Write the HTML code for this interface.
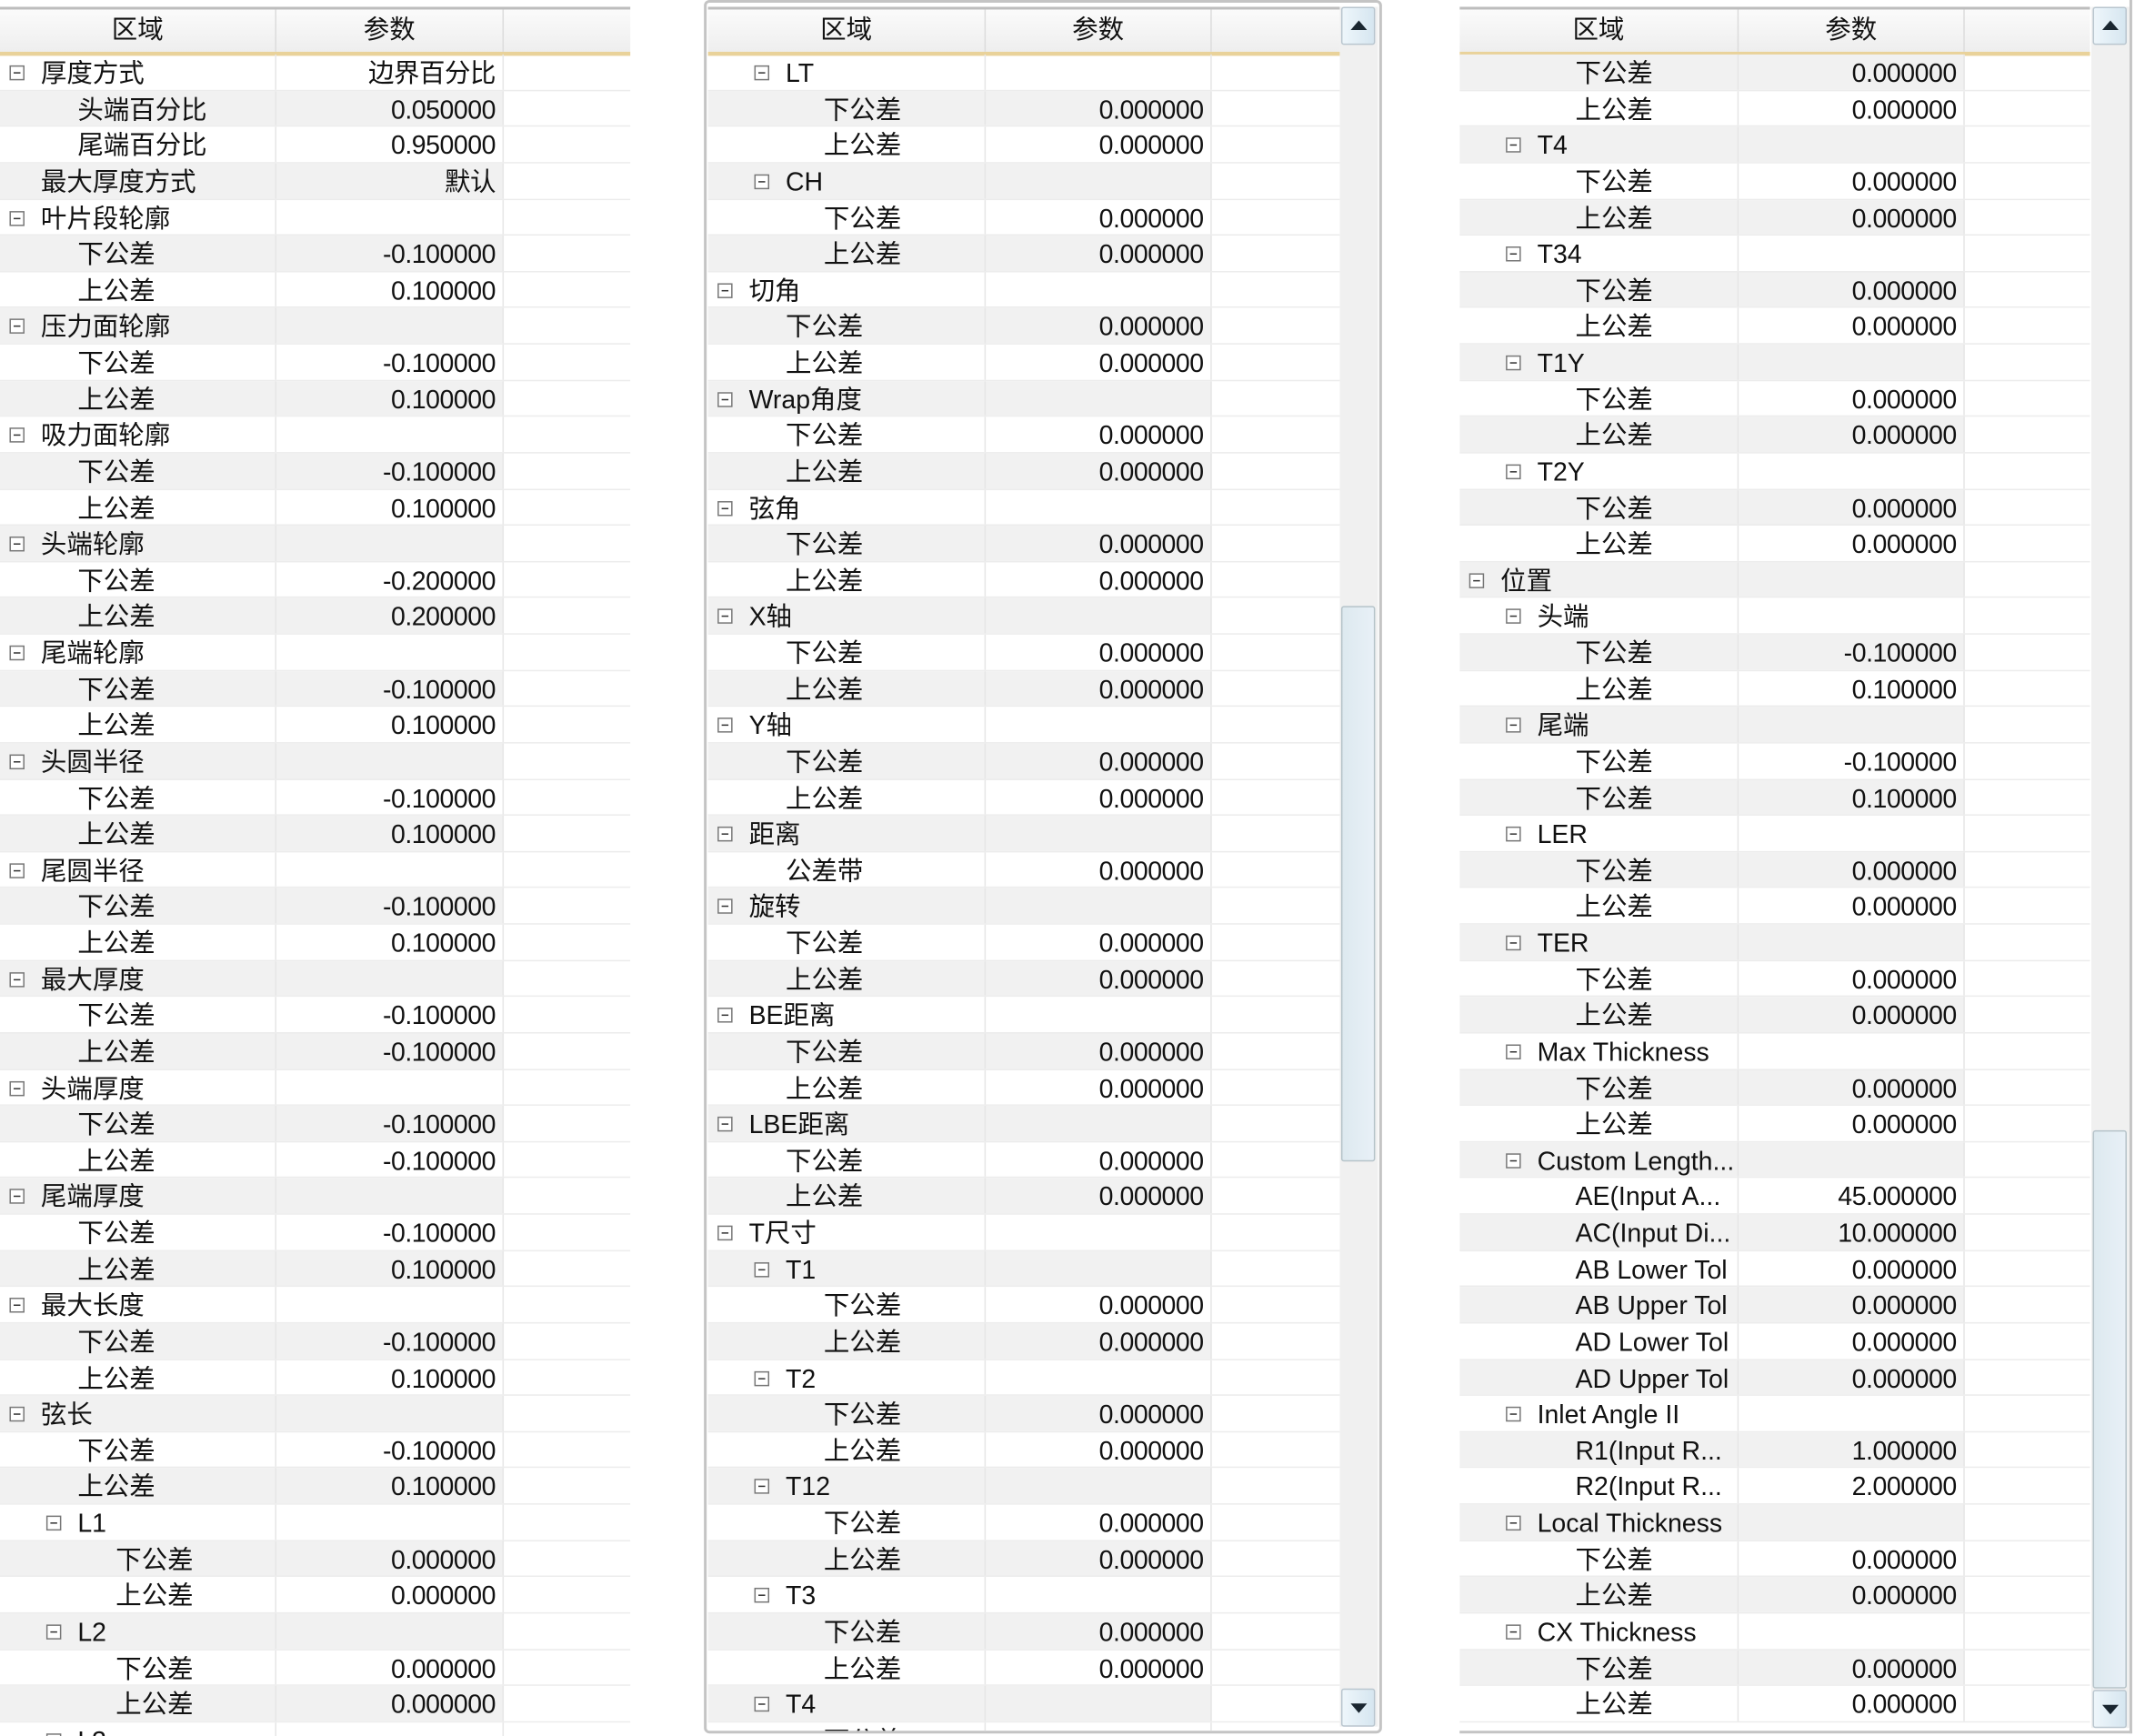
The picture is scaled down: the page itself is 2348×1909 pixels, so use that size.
<!DOCTYPE html>
<html><head><meta charset="utf-8">
<style>
html,body{margin:0;padding:0;background:#fff;overflow:hidden}
body{width:2348px;height:1909px}
#w{position:absolute;left:0;top:0;width:1568px;height:1275px;transform:scale(1.4974);transform-origin:0 0;font-family:"Liberation Sans","Noto Sans CJK SC",sans-serif;font-size:19px;color:#111}
.pn{position:absolute;top:0;overflow:hidden;background:#fff}
.hd{position:absolute;left:0;top:5px;height:31px;display:flex;background:linear-gradient(#fbfbfb,#eeeeee);border-top:2px solid #bdbdbd;border-bottom:3px solid #e9d29a}
.hd div{text-align:center;line-height:32px;border-right:1px solid #dcdcdc;box-sizing:border-box}
.bd{position:absolute;left:0;top:40px}
p{margin:0;height:26.64px;display:flex;position:relative;line-height:29px;box-sizing:border-box;border-bottom:1px solid #ececec}
p b{font-weight:normal;box-sizing:border-box;border-right:1px solid #e6e6e6;white-space:nowrap;overflow:hidden;position:relative}
p s{text-decoration:none;box-sizing:border-box;text-align:right;padding-right:5px;border-right:1px solid #e6e6e6;letter-spacing:-0.3px}
p i{flex:1}
.g b,.g s{background:#f1f1f1}
.l0 b{padding-left:30px}.l1 b{padding-left:57px}.l2 b{padding-left:85px}
.t b:before{content:"";position:absolute;top:8px;width:9px;height:9px;border:1px solid #777;background:#fff}
.t b:after{content:"";position:absolute;top:13px;width:5px;height:1px;background:#333}
.l0.t b:before{left:7px}.l0.t b:after{left:10px}
.l1.t b:before{left:34px}.l1.t b:after{left:37px}
#p1 b{width:203px}#p1 s{width:167px}
#p2 b{width:204px}#p2 s{width:166px}
#p3 b{width:205px}#p3 s{width:166px}
.sb{position:absolute;top:5px;width:28px;bottom:5px;background:#f0f0f0}
.btn{position:absolute;left:1px;width:25px;height:28px;background:linear-gradient(90deg,#eef6fb,#d6e6f0);border:1px solid #b9c6cf;box-sizing:border-box;border-radius:2px}
.up:after{content:"";position:absolute;left:6px;top:9px;border-left:6px solid transparent;border-right:6px solid transparent;border-bottom:7px solid #1a2630}
.dn:after{content:"";position:absolute;left:6px;top:10px;border-left:6px solid transparent;border-right:6px solid transparent;border-top:7px solid #1a2630}
.th{position:absolute;left:1px;width:25px;background:linear-gradient(90deg,#dde9ef,#e8f0f7);border:1px solid #b5c3c9;box-sizing:border-box;border-radius:2px}
</style></head><body><div id="w">

<div class="pn" id="p1" style="left:0;width:463px;height:1275px">
<div class="hd" style="width:463px"><div style="width:203px">区域</div><div style="width:167px">参数</div><div style="flex:1;border:0"></div></div>
<div class="bd" style="width:463px">
<p class="l0 t"><b>厚度方式</b><s>边界百分比</s><i></i></p>
<p class="l1 g"><b>头端百分比</b><s>0.050000</s><i></i></p>
<p class="l1"><b>尾端百分比</b><s>0.950000</s><i></i></p>
<p class="l0 g"><b>最大厚度方式</b><s>默认</s><i></i></p>
<p class="l0 t"><b>叶片段轮廓</b><s></s><i></i></p>
<p class="l1 g"><b>下公差</b><s>-0.100000</s><i></i></p>
<p class="l1"><b>上公差</b><s>0.100000</s><i></i></p>
<p class="l0 t g"><b>压力面轮廓</b><s></s><i></i></p>
<p class="l1"><b>下公差</b><s>-0.100000</s><i></i></p>
<p class="l1 g"><b>上公差</b><s>0.100000</s><i></i></p>
<p class="l0 t"><b>吸力面轮廓</b><s></s><i></i></p>
<p class="l1 g"><b>下公差</b><s>-0.100000</s><i></i></p>
<p class="l1"><b>上公差</b><s>0.100000</s><i></i></p>
<p class="l0 t g"><b>头端轮廓</b><s></s><i></i></p>
<p class="l1"><b>下公差</b><s>-0.200000</s><i></i></p>
<p class="l1 g"><b>上公差</b><s>0.200000</s><i></i></p>
<p class="l0 t"><b>尾端轮廓</b><s></s><i></i></p>
<p class="l1 g"><b>下公差</b><s>-0.100000</s><i></i></p>
<p class="l1"><b>上公差</b><s>0.100000</s><i></i></p>
<p class="l0 t g"><b>头圆半径</b><s></s><i></i></p>
<p class="l1"><b>下公差</b><s>-0.100000</s><i></i></p>
<p class="l1 g"><b>上公差</b><s>0.100000</s><i></i></p>
<p class="l0 t"><b>尾圆半径</b><s></s><i></i></p>
<p class="l1 g"><b>下公差</b><s>-0.100000</s><i></i></p>
<p class="l1"><b>上公差</b><s>0.100000</s><i></i></p>
<p class="l0 t g"><b>最大厚度</b><s></s><i></i></p>
<p class="l1"><b>下公差</b><s>-0.100000</s><i></i></p>
<p class="l1 g"><b>上公差</b><s>-0.100000</s><i></i></p>
<p class="l0 t"><b>头端厚度</b><s></s><i></i></p>
<p class="l1 g"><b>下公差</b><s>-0.100000</s><i></i></p>
<p class="l1"><b>上公差</b><s>-0.100000</s><i></i></p>
<p class="l0 t g"><b>尾端厚度</b><s></s><i></i></p>
<p class="l1"><b>下公差</b><s>-0.100000</s><i></i></p>
<p class="l1 g"><b>上公差</b><s>0.100000</s><i></i></p>
<p class="l0 t"><b>最大长度</b><s></s><i></i></p>
<p class="l1 g"><b>下公差</b><s>-0.100000</s><i></i></p>
<p class="l1"><b>上公差</b><s>0.100000</s><i></i></p>
<p class="l0 t g"><b>弦长</b><s></s><i></i></p>
<p class="l1"><b>下公差</b><s>-0.100000</s><i></i></p>
<p class="l1 g"><b>上公差</b><s>0.100000</s><i></i></p>
<p class="l1 t"><b>L1</b><s></s><i></i></p>
<p class="l2 g"><b>下公差</b><s>0.000000</s><i></i></p>
<p class="l2"><b>上公差</b><s>0.000000</s><i></i></p>
<p class="l1 t g"><b>L2</b><s></s><i></i></p>
<p class="l2"><b>下公差</b><s>0.000000</s><i></i></p>
<p class="l2 g"><b>上公差</b><s>0.000000</s><i></i></p>
<p class="l1 t"><b>L3</b><s></s><i></i></p>
</div></div>

<div class="pn" id="p2" style="left:517px;width:498px;height:1273px;border:2px solid #c4c4c4;border-radius:4px;box-sizing:border-box">
<div class="hd" style="width:464px;left:1px;top:3px"><div style="width:204px">区域</div><div style="width:166px">参数</div><div style="flex:1;border:0"></div></div>
<div class="bd" style="width:464px;left:1px;top:38px">
<p class="l1 t"><b>LT</b><s></s><i></i></p>
<p class="l2 g"><b>下公差</b><s>0.000000</s><i></i></p>
<p class="l2"><b>上公差</b><s>0.000000</s><i></i></p>
<p class="l1 t g"><b>CH</b><s></s><i></i></p>
<p class="l2"><b>下公差</b><s>0.000000</s><i></i></p>
<p class="l2 g"><b>上公差</b><s>0.000000</s><i></i></p>
<p class="l0 t"><b>切角</b><s></s><i></i></p>
<p class="l1 g"><b>下公差</b><s>0.000000</s><i></i></p>
<p class="l1"><b>上公差</b><s>0.000000</s><i></i></p>
<p class="l0 t g"><b>Wrap角度</b><s></s><i></i></p>
<p class="l1"><b>下公差</b><s>0.000000</s><i></i></p>
<p class="l1 g"><b>上公差</b><s>0.000000</s><i></i></p>
<p class="l0 t"><b>弦角</b><s></s><i></i></p>
<p class="l1 g"><b>下公差</b><s>0.000000</s><i></i></p>
<p class="l1"><b>上公差</b><s>0.000000</s><i></i></p>
<p class="l0 t g"><b>X轴</b><s></s><i></i></p>
<p class="l1"><b>下公差</b><s>0.000000</s><i></i></p>
<p class="l1 g"><b>上公差</b><s>0.000000</s><i></i></p>
<p class="l0 t"><b>Y轴</b><s></s><i></i></p>
<p class="l1 g"><b>下公差</b><s>0.000000</s><i></i></p>
<p class="l1"><b>上公差</b><s>0.000000</s><i></i></p>
<p class="l0 t g"><b>距离</b><s></s><i></i></p>
<p class="l1"><b>公差带</b><s>0.000000</s><i></i></p>
<p class="l0 t g"><b>旋转</b><s></s><i></i></p>
<p class="l1"><b>下公差</b><s>0.000000</s><i></i></p>
<p class="l1 g"><b>上公差</b><s>0.000000</s><i></i></p>
<p class="l0 t"><b>BE距离</b><s></s><i></i></p>
<p class="l1 g"><b>下公差</b><s>0.000000</s><i></i></p>
<p class="l1"><b>上公差</b><s>0.000000</s><i></i></p>
<p class="l0 t g"><b>LBE距离</b><s></s><i></i></p>
<p class="l1"><b>下公差</b><s>0.000000</s><i></i></p>
<p class="l1 g"><b>上公差</b><s>0.000000</s><i></i></p>
<p class="l0 t"><b>T尺寸</b><s></s><i></i></p>
<p class="l1 t g"><b>T1</b><s></s><i></i></p>
<p class="l2"><b>下公差</b><s>0.000000</s><i></i></p>
<p class="l2 g"><b>上公差</b><s>0.000000</s><i></i></p>
<p class="l1 t"><b>T2</b><s></s><i></i></p>
<p class="l2 g"><b>下公差</b><s>0.000000</s><i></i></p>
<p class="l2"><b>上公差</b><s>0.000000</s><i></i></p>
<p class="l1 t g"><b>T12</b><s></s><i></i></p>
<p class="l2"><b>下公差</b><s>0.000000</s><i></i></p>
<p class="l2 g"><b>上公差</b><s>0.000000</s><i></i></p>
<p class="l1 t"><b>T3</b><s></s><i></i></p>
<p class="l2 g"><b>下公差</b><s>0.000000</s><i></i></p>
<p class="l2"><b>上公差</b><s>0.000000</s><i></i></p>
<p class="l1 t g"><b>T4</b><s></s><i></i></p>
<p class="l2"><b>下公差</b><s>0.000000</s><i></i></p>
</div>
<div class="sb" style="left:465px;top:3px;bottom:3px">
<div class="btn up" style="top:0"></div>
<div class="th" style="top:440px;height:408px"></div>
<div class="btn dn" style="bottom:0"></div>
</div>
</div>

<div class="pn" id="p3" style="left:1072px;width:494px;height:1273px;border-bottom:2px solid #c4c4c4;border-right:2px solid #c4c4c4;box-sizing:border-box">
<div class="hd" style="width:463px"><div style="width:205px">区域</div><div style="width:166px">参数</div><div style="flex:1;border:0"></div></div>
<div class="bd" style="width:463px">
<p class="l2 g"><b>下公差</b><s>0.000000</s><i></i></p>
<p class="l2"><b>上公差</b><s>0.000000</s><i></i></p>
<p class="l1 t g"><b>T4</b><s></s><i></i></p>
<p class="l2"><b>下公差</b><s>0.000000</s><i></i></p>
<p class="l2 g"><b>上公差</b><s>0.000000</s><i></i></p>
<p class="l1 t"><b>T34</b><s></s><i></i></p>
<p class="l2 g"><b>下公差</b><s>0.000000</s><i></i></p>
<p class="l2"><b>上公差</b><s>0.000000</s><i></i></p>
<p class="l1 t g"><b>T1Y</b><s></s><i></i></p>
<p class="l2"><b>下公差</b><s>0.000000</s><i></i></p>
<p class="l2 g"><b>上公差</b><s>0.000000</s><i></i></p>
<p class="l1 t"><b>T2Y</b><s></s><i></i></p>
<p class="l2 g"><b>下公差</b><s>0.000000</s><i></i></p>
<p class="l2"><b>上公差</b><s>0.000000</s><i></i></p>
<p class="l0 t g"><b>位置</b><s></s><i></i></p>
<p class="l1 t"><b>头端</b><s></s><i></i></p>
<p class="l2 g"><b>下公差</b><s>-0.100000</s><i></i></p>
<p class="l2"><b>上公差</b><s>0.100000</s><i></i></p>
<p class="l1 t g"><b>尾端</b><s></s><i></i></p>
<p class="l2"><b>下公差</b><s>-0.100000</s><i></i></p>
<p class="l2 g"><b>下公差</b><s>0.100000</s><i></i></p>
<p class="l1 t"><b>LER</b><s></s><i></i></p>
<p class="l2 g"><b>下公差</b><s>0.000000</s><i></i></p>
<p class="l2"><b>上公差</b><s>0.000000</s><i></i></p>
<p class="l1 t g"><b>TER</b><s></s><i></i></p>
<p class="l2"><b>下公差</b><s>0.000000</s><i></i></p>
<p class="l2 g"><b>上公差</b><s>0.000000</s><i></i></p>
<p class="l1 t"><b>Max Thickness</b><s></s><i></i></p>
<p class="l2 g"><b>下公差</b><s>0.000000</s><i></i></p>
<p class="l2"><b>上公差</b><s>0.000000</s><i></i></p>
<p class="l1 t g"><b>Custom Length...</b><s></s><i></i></p>
<p class="l2"><b>AE(Input A...</b><s>45.000000</s><i></i></p>
<p class="l2 g"><b>AC(Input Di...</b><s>10.000000</s><i></i></p>
<p class="l2"><b>AB Lower Tol</b><s>0.000000</s><i></i></p>
<p class="l2 g"><b>AB Upper Tol</b><s>0.000000</s><i></i></p>
<p class="l2"><b>AD Lower Tol</b><s>0.000000</s><i></i></p>
<p class="l2 g"><b>AD Upper Tol</b><s>0.000000</s><i></i></p>
<p class="l1 t"><b>Inlet Angle II</b><s></s><i></i></p>
<p class="l2 g"><b>R1(Input R...</b><s>1.000000</s><i></i></p>
<p class="l2"><b>R2(Input R...</b><s>2.000000</s><i></i></p>
<p class="l1 t g"><b>Local Thickness</b><s></s><i></i></p>
<p class="l2"><b>下公差</b><s>0.000000</s><i></i></p>
<p class="l2 g"><b>上公差</b><s>0.000000</s><i></i></p>
<p class="l1 t"><b>CX Thickness</b><s></s><i></i></p>
<p class="l2 g"><b>下公差</b><s>0.000000</s><i></i></p>
<p class="l2"><b>上公差</b><s>0.000000</s><i></i></p>
</div>
<div class="sb" style="left:464px;top:5px;bottom:2px">
<div class="btn up" style="top:0"></div>
<div class="th" style="top:825px;height:410px"></div>
<div class="btn dn" style="bottom:0"></div>
</div>
</div>

</div></body></html>
